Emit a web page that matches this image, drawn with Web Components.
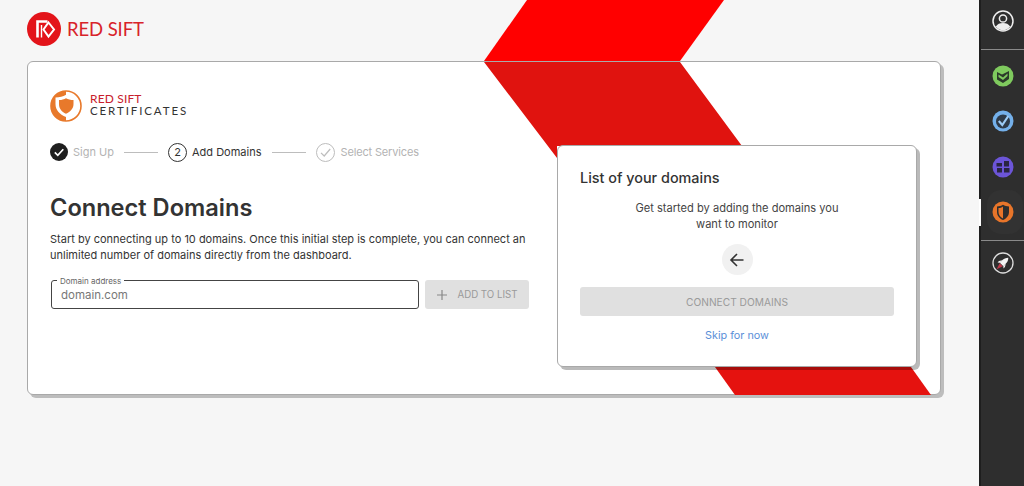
<!DOCTYPE html>
<html lang="en">
<head>
<meta charset="utf-8">
<title>Red Sift Certificates</title>
<style>
  html, body { margin: 0; height: 100%; }
  body { font-family: "Inter", "Liberation Sans", sans-serif; overflow: hidden; }
</style>
</head>
<body>
<app-shell>
  <brand-header></brand-header>
  <signup-card>
    <product-logo></product-logo>
    <step-list></step-list>
    <connect-form></connect-form>
    <domain-panel slot="panel"></domain-panel>
  </signup-card>
  <side-rail slot="rail"></side-rail>
</app-shell>

<script>
class AppShell extends HTMLElement {
  constructor() {
    super();
    this.attachShadow({ mode: 'open' });
    this.shadowRoot.innerHTML = `
      <style>
        :host { display: grid; grid-template-columns: 1fr 45px; height: 486px; background: #f6f6f6; overflow: hidden; }
        .main { position: relative; padding: 12px 38px 0 27px; min-width: 0; }
        .ribbon { position: absolute; left: 484px; top: 0; }
        .content { position: relative; }
      </style>
      <div class="main">
        <svg class="ribbon" width="240" height="61" viewBox="0 0 240 61"><polygon points="0,61 43,0 240,0 196,61" fill="#ff0000"/></svg>
        <div class="content"><slot></slot></div>
      </div>
      <slot name="rail"></slot>
    `;
  }
}

class BrandHeader extends HTMLElement {
  constructor() {
    super();
    this.attachShadow({ mode: 'open' });
    this.shadowRoot.innerHTML = `
      <style>
        :host { display: flex; align-items: center; gap: 6px; height: 34px; margin-bottom: 15px; }
        .word { font: 400 18.500px/1 "Lato", sans-serif; color: #d8232a; letter-spacing: -.1px; }
      </style>
      <svg width="34" height="34" viewBox="0 0 34 34">
        <circle cx="17" cy="17" r="17" fill="#e3141a"/>
        <path d="M10.500 25.500V9.500h10" fill="none" stroke="#fff" stroke-width="2.600"/>
        <path d="M14.500 13v12.500" fill="none" stroke="#fff" stroke-width="1.400"/>
        <path d="M21.500 10.500l5.500 7-5.500 7-5-7z" fill="none" stroke="#fff" stroke-width="2"/>
      </svg>
      <span class="word">RED SIFT</span>
    `;
  }
}

class SignupCard extends HTMLElement {
  constructor() {
    super();
    this.attachShadow({ mode: 'open' });
    this.shadowRoot.innerHTML = `
      <style>
        :host { display: block; position: relative; box-sizing: border-box; height: 334px; background: #fff;
          border: 1px solid #a9a9a9; border-radius: 6px; box-shadow: 3px 3px 0 #bdbdbd; }
        .deco { position: absolute; left: 456px; top: 0; }
        .row { position: relative; display: flex; justify-content: space-between; height: 100%; box-sizing: border-box; padding: 83px 23px 0 22px; }
        .left { width: 480px; margin-top: -55px; }
      </style>
      <svg class="deco" width="458" height="333" viewBox="0 0 458 333">
        <polygon points="0,0 196,0 258,84 73,84 73,96" fill="#e0130f"/>
        <polygon points="231,305 427,305 447,333 251,333" fill="#e5120f"/>
      </svg>
      <div class="row">
        <div class="left"><slot></slot></div>
        <slot name="panel"></slot>
      </div>
    `;
  }
}

class ProductLogo extends HTMLElement {
  constructor() {
    super();
    this.attachShadow({ mode: 'open' });
    this.shadowRoot.innerHTML = `
      <style>
        :host { display: flex; align-items: center; gap: 8px; height: 32px; }
        .text { display: flex; flex-direction: column; margin-top: -3px; }
        .a { font: 400 12px/12px "Lato", sans-serif; color: #c8202c; letter-spacing: .15px; }
        .b { font: 400 11.500px/12px "Lato", sans-serif; color: #333; letter-spacing: 1.9px; }
      </style>
      <svg width="32" height="32" viewBox="0 0 32 32">
        <circle cx="16" cy="16" r="15" fill="#fff" stroke="#e8792b" stroke-width="1.600"/>
        <path d="M16 1A15 15 0 0 0 16 31z" fill="#e8792b"/>
        <path d="M5.500 7.500c4 0 7.500-1 10.500-2.700 3 1.700 6.500 2.700 10.500 2.700V14c0 6-4 10.500-10.500 13C9.500 24.500 5.500 20 5.500 14z" fill="#fff"/>
        <path d="M9 10c3 0 5-.6 7-1.800 2 1.200 4.500 1.800 7.500 1.800v4c0 4.500-3 7.800-7.500 9.800C11.500 21.800 9 18.500 9 14z" fill="#e8792b"/>
      </svg>
      <div class="text"><span class="a">RED SIFT</span><span class="b">CERTIFICATES</span></div>
    `;
  }
}

class StepList extends HTMLElement {
  constructor() {
    super();
    this.attachShadow({ mode: 'open' });
    this.shadowRoot.innerHTML = `
      <style>
        :host { display: flex; align-items: center; height: 20px; margin-top: 20px; font-size: 11px; color: #333; }
        .step { display: flex; align-items: center; gap: 5px; white-space: nowrap; }
        .off { color: #b3b3b3; }
        .line { width: 34px; height: 1px; background: #bdbdbd; margin: 0 10px; }
        .line.next { margin: 0 10.500px; }
        .num { box-sizing: border-box; width: 19px; height: 19px; border: 1px solid #333; border-radius: 50%;
          display: flex; align-items: center; justify-content: center; font-size: 11px; }
        .tight { letter-spacing: -.15px; }
      </style>
      <div class="step off">
        <svg width="18" height="18" viewBox="0 0 18 18"><circle cx="9" cy="9" r="9" fill="#1f1f1f"/><path d="M4.800 9.300l3 3 5.500-6" fill="none" stroke="#fff" stroke-width="1.700"/></svg>
        <span>Sign Up</span>
      </div>
      <div class="line"></div>
      <div class="step"><span class="num">2</span><span>Add Domains</span></div>
      <div class="line next"></div>
      <div class="step off">
        <svg width="19" height="19" viewBox="0 0 19 19"><circle cx="9.500" cy="9.500" r="9" fill="none" stroke="#bdbdbd"/><path d="M5 9.800l3.200 3.200 6-7" fill="none" stroke="#bdbdbd" stroke-width="1.200"/></svg>
        <span class="tight">Select Services</span>
      </div>
    `;
  }
}

class ConnectForm extends HTMLElement {
  constructor() {
    super();
    this.attachShadow({ mode: 'open' });
    this.shadowRoot.innerHTML = `
      <style>
        :host { display: block; margin-top: 31px; }
        h1 { margin: 0; font: 600 23.600px/30px "Inter", sans-serif; color: #333; }
        p { margin: 8px 0 0; font-size: 11px; line-height: 16px; color: #333; }
        .row { display: flex; gap: 6px; margin: 17px 0 0 1px; }
        .field { position: relative; box-sizing: border-box; width: 368px; height: 29px; border: 1.500px solid #444;
          border-radius: 3px; padding: 1px 9px 0; display: flex; align-items: center; font-size: 11.500px; color: #777; }
        .label { position: absolute; left: 5px; top: -5px; padding: 0 3px; background: #fff; font-size: 8px; line-height: 10px; color: #666; }
        .add { box-sizing: border-box; width: 104px; height: 29px; border-radius: 3px; background: #e0e0e0; color: #9a9a9a;
          display: flex; align-items: center; justify-content: center; gap: 9px; font-size: 9.700px; white-space: nowrap; }
      </style>
      <h1>Connect Domains</h1>
      <p>Start by connecting up to 10 domains. Once this initial step is complete, you can connect an unlimited number of domains directly from the dashboard.</p>
      <div class="row">
        <div class="field"><span class="label">Domain address</span>domain.com</div>
        <div class="add">
          <svg width="12" height="12" viewBox="0 0 12 12"><path d="M6 1v10M1 6h10" stroke="#888" stroke-width="1.200"/></svg>
          <span>ADD TO LIST</span>
        </div>
      </div>
    `;
  }
}

class DomainPanel extends HTMLElement {
  constructor() {
    super();
    this.attachShadow({ mode: 'open' });
    this.shadowRoot.innerHTML = `
      <style>
        :host { display: flex; flex-direction: column; align-items: center; box-sizing: border-box; width: 360px; height: 222px;
          padding: 22px 22px 0; background: #fff; border: 1px solid #a9a9a9; border-radius: 6px; box-shadow: 3px 3px 0 rgba(0,0,0,.27); }
        h2 { align-self: stretch; margin: 0; font: 500 14.400px/20px "Inter", sans-serif; color: #333; }
        p { margin: 12px 0 0; width: 215px; text-align: center; font-size: 11.100px; line-height: 16px; color: #444; }
        .back { width: 31px; height: 31px; margin-top: 12px; border-radius: 50%; background: #f1f1f1; display: flex; align-items: center; justify-content: center; }
        .connect { align-self: stretch; height: 29px; margin-top: 12px; border-radius: 3px; background: #e0e0e0; color: #9a9a9a;
          display: flex; align-items: center; justify-content: center; font-size: 10.200px; }
        a { margin-top: 13px; font-size: 10.800px; color: #5a8fd8; text-decoration: none; }
      </style>
      <h2>List of your domains</h2>
      <p>Get started by adding the domains you want to monitor</p>
      <div class="back"><svg width="16" height="16" viewBox="0 0 16 16"><path d="M14.500 8H2M8 2 2 8l6 6" fill="none" stroke="#333" stroke-width="1.600"/></svg></div>
      <div class="connect">CONNECT DOMAINS</div>
      <a href="#">Skip for now</a>
    `;
  }
}

class SideRail extends HTMLElement {
  constructor() {
    super();
    this.attachShadow({ mode: 'open' });
    this.shadowRoot.innerHTML = `
      <style>
        :host { display: flex; flex-direction: column; background: #2e2e2e; border-left: 2px solid #1e1e1e; box-sizing: border-box; }
        .item { position: relative; display: flex; align-items: center; justify-content: center; height: 45.500px; }
        .top { height: 50px; border-bottom: 1px solid #8a8a8a; margin-bottom: 3px; padding-bottom: 8px; box-sizing: border-box; }
        .on::before { content: ""; position: absolute; left: -2px; top: 9px; width: 2px; height: 27px; background: #fff; }
        .on::after { content: ""; position: absolute; left: 6px; top: 0; width: 36px; height: 44px; border-radius: 14px; background: #323232; z-index: 0; }
        svg { position: relative; z-index: 1; }
        .sep { height: 1px; background: #8a8a8a; margin-top: 5px; }
        .rocket { height: 44px; }
      </style>
      <div class="item top"><svg width="22" height="22" viewBox="0 0 22 22"><circle cx="11" cy="11" r="10" fill="none" stroke="#eee" stroke-width="1.500"/><circle cx="11" cy="8.500" r="3.600" fill="none" stroke="#eee" stroke-width="1.500"/><path d="M3.800 16.500c1.600-2.400 4-3.500 7.200-3.500s5.600 1.100 7.200 3.500A10 10 0 0 1 11 20.500a10 10 0 0 1-7.200-4z" fill="#eee"/></svg></div>
      <div class="item"><svg width="22" height="22" viewBox="0 0 22 22"><circle cx="11" cy="11" r="10.500" fill="#7fca5e"/><path d="M5 7l5 2.500L17 6v8l-6 4-6-3.500z" fill="#2b3a2a"/><path d="M6.500 9.500l4.500 3 4.500-4v2.500L11 15l-4.500-3z" fill="#7fca5e"/></svg></div>
      <div class="item"><svg width="22" height="22" viewBox="0 0 22 22"><circle cx="11" cy="11" r="10.500" fill="#74b0ea"/><circle cx="11" cy="11.500" r="7" fill="#2e3a48"/><path d="M6.800 11l3.500 4 6-9" fill="none" stroke="#9ccbf5" stroke-width="2.200"/></svg></div>
      <div class="item"><svg width="22" height="22" viewBox="0 0 22 22"><circle cx="11" cy="11" r="10.500" fill="#6c55d8"/><g fill="#2a2540"><rect x="4.500" y="7" width="5.500" height="3.500"/><rect x="12" y="5" width="5" height="5.500"/><rect x="5" y="12" width="5" height="4.500"/><rect x="12" y="12" width="5.500" height="4.500"/></g></svg></div>
      <div class="item on"><svg width="22" height="22" viewBox="0 0 22 22"><circle cx="11" cy="11" r="10.500" fill="#e8752a"/><path d="M5 5.500c2.300 0 4.200-.6 6-1.700 1.800 1.100 3.700 1.700 6 1.700V11c0 3.800-2.500 6.500-6 8-3.500-1.500-6-4.200-6-8z" fill="#2e2e2e"/><path d="M11 5.500V17.500C8.200 16 6.500 13.800 6.500 11V7c1.800 0 3.200-.5 4.500-1.500z" fill="#e8752a"/></svg></div>
      <div class="sep"></div>
      <div class="item rocket"><svg width="22" height="22" viewBox="0 0 22 22"><circle cx="11" cy="11" r="10" fill="#2e2e2e" stroke="#ddd" stroke-width="1.300"/><g transform="rotate(45 11 11)"><path d="M11 3.500c1.800 1.800 2.500 3.800 2.500 6.200v3.300h-5V9.700c0-2.400.7-4.400 2.500-6.200z" fill="#f4f4f4"/><path d="M8.500 9.500 6.800 12.500v2l1.700-1.500zM13.500 9.500l1.700 3v2L13.500 13z" fill="#f4f4f4"/><path d="M8.800 13.500h4.400L11 20z" fill="#c0394a"/></g></svg></div>
    `;
  }
}

customElements.define('app-shell', AppShell);
customElements.define('brand-header', BrandHeader);
customElements.define('signup-card', SignupCard);
customElements.define('product-logo', ProductLogo);
customElements.define('step-list', StepList);
customElements.define('connect-form', ConnectForm);
customElements.define('domain-panel', DomainPanel);
customElements.define('side-rail', SideRail);
</script>
</body>
</html>
